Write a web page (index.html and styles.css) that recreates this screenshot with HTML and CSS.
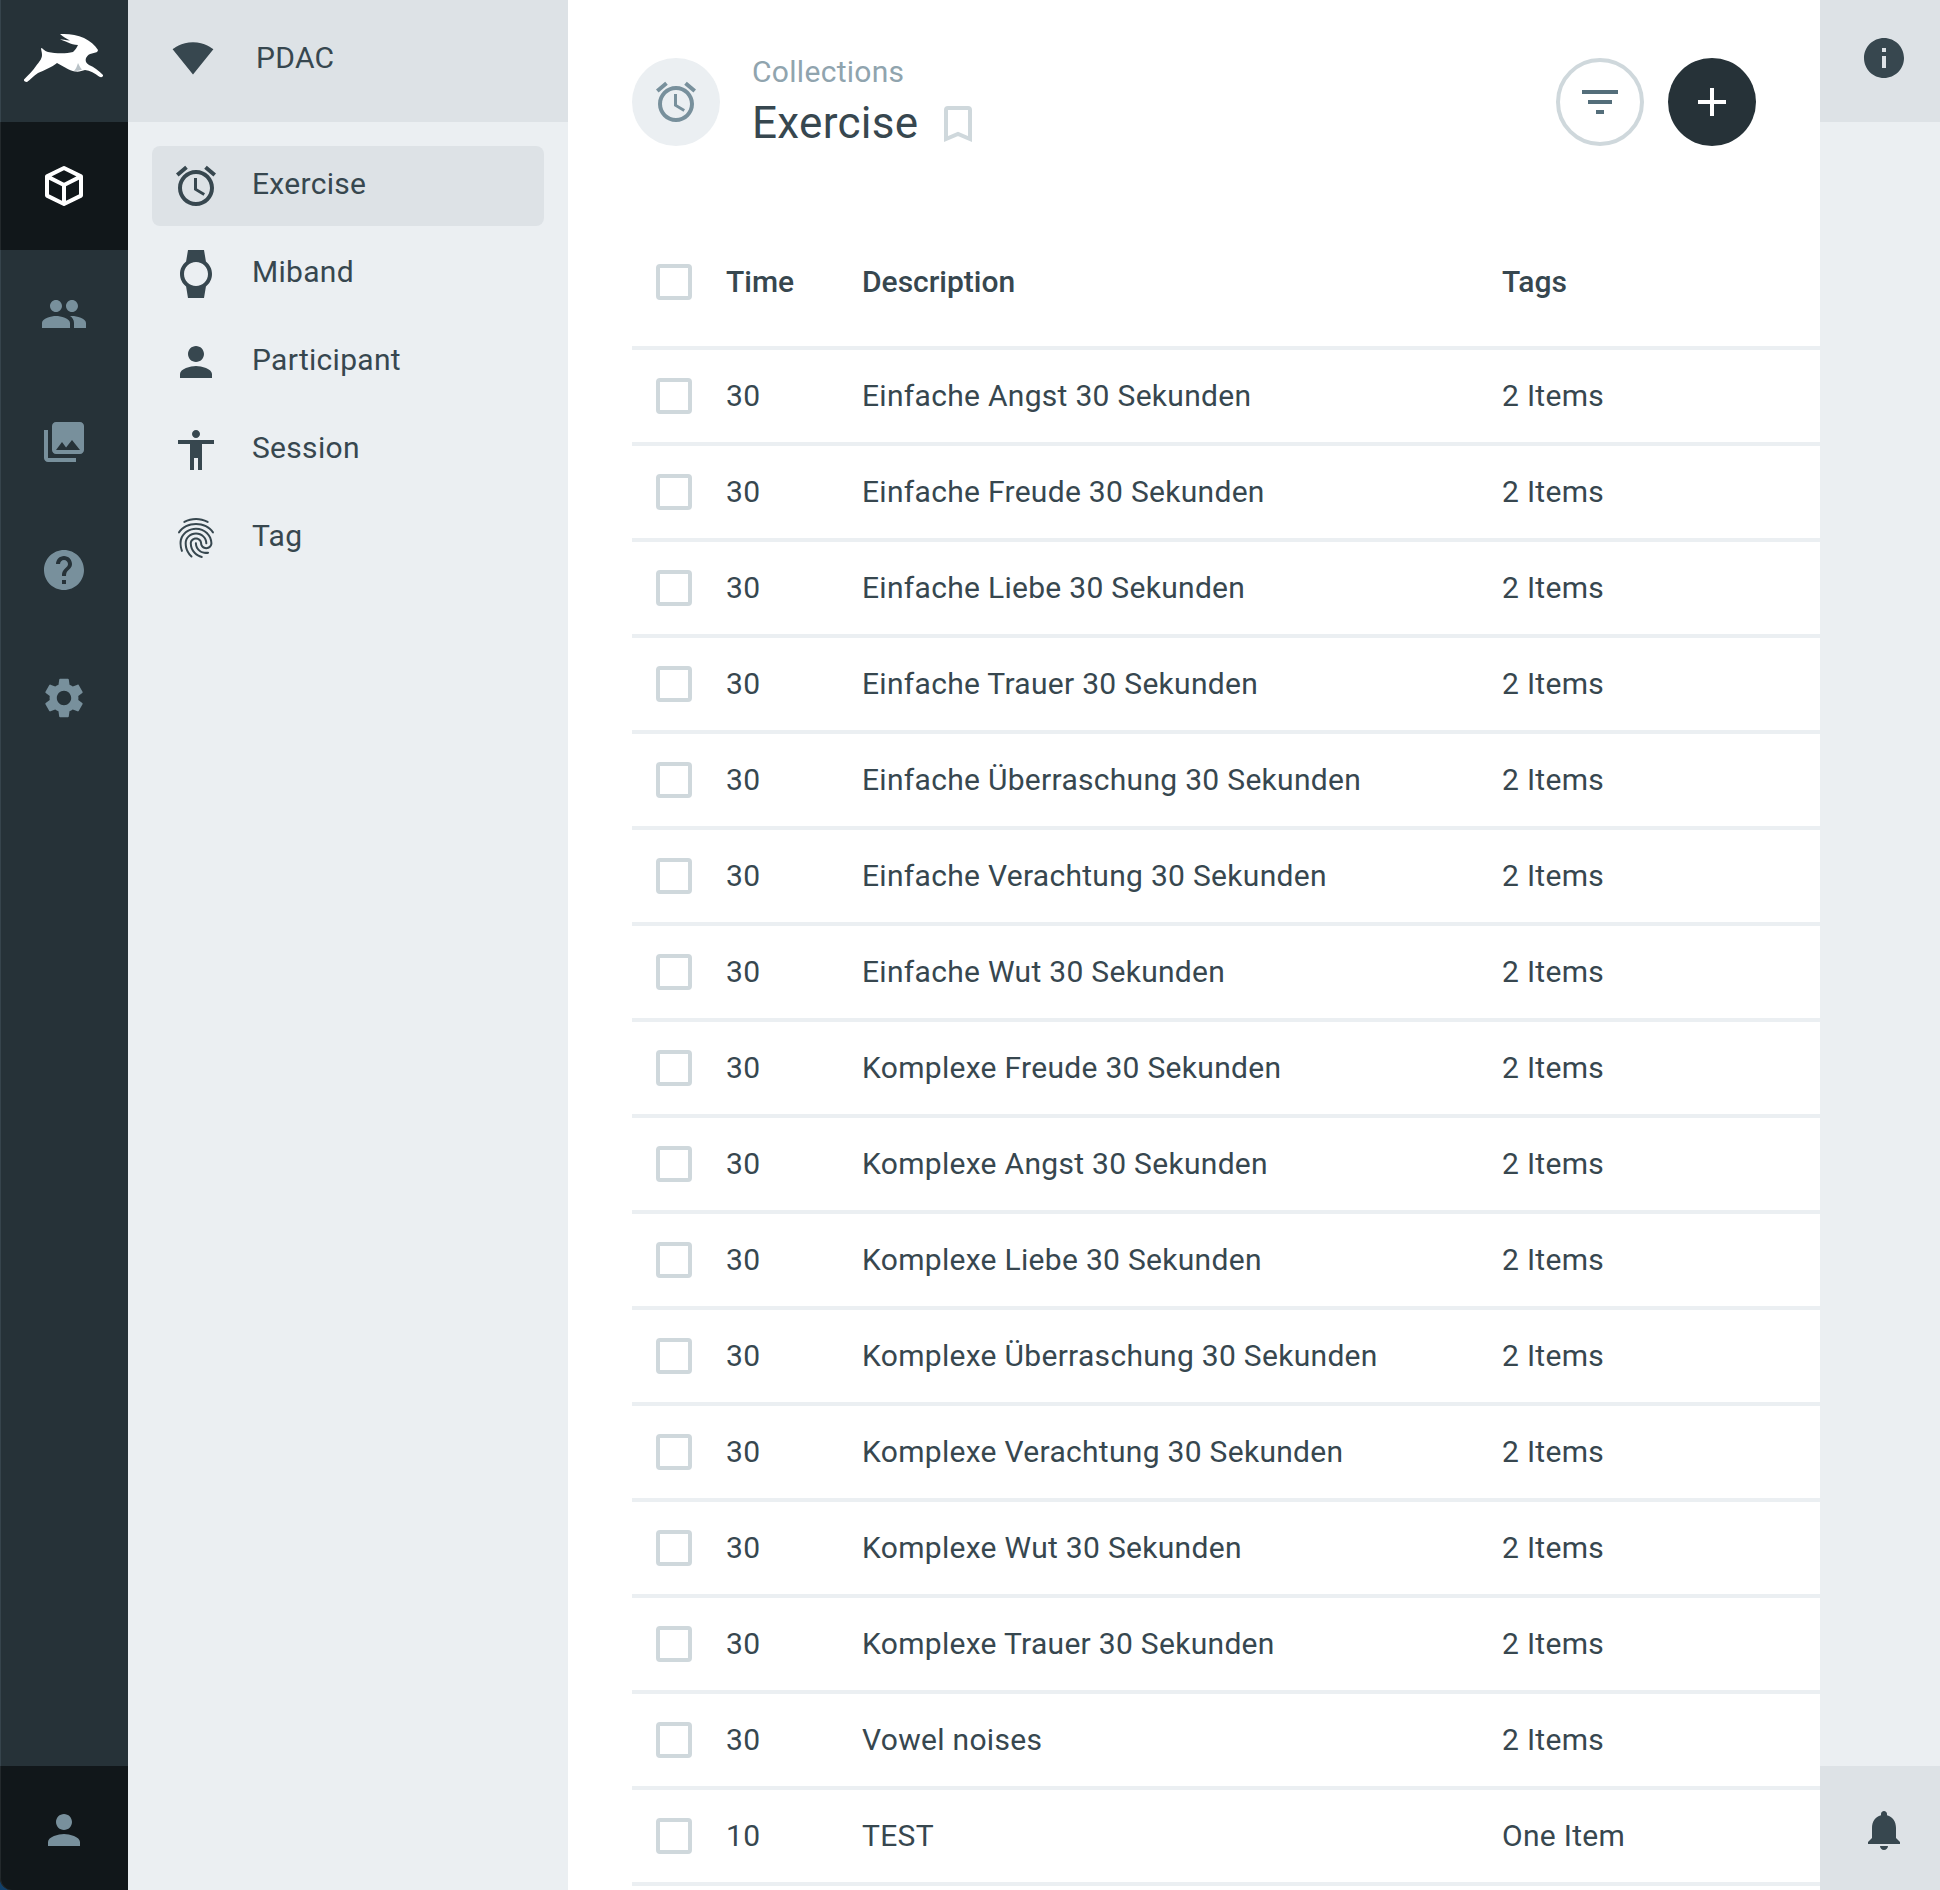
FILE: index.html
```html
<!DOCTYPE html>
<html lang="en">
<head>
    <meta charset="UTF-8">
    <title>Exercise - Collections</title>
    <link rel="stylesheet" href="styles.css">
</head>
<body>
    <div class="rail">
        <div class="rail-logo">
            <svg class="logo-hare" viewBox="0 0 80 48">
                <path fill="#fff" d="M36 0C44 -.5 53 .5 60 4C66 7 71 11 74 16C74 18 72 18.500 68 19.500C65 20 64 21 62 24C61 27 62 29 65 31C70 33 75 37 79 41C79.500 43 77 44 75 42.500C71 39.500 66 36.500 61 36C58 37 55 38 51 37.500C45 36.500 39 32 33 29C28 33 20 36.500 14 39C9 42 6 46 3 48C1 48 -.5 47 0 45.500C4 41 9 37 12 32C15 28 18 25 18 21C18 18 17 16 17 14C19 14 20 17 24 18C31 19.500 42 20 49 18C52 15 53 13 54 11C50 11 47 10 44 8.500C41 7 38 6 36 5.500C38 5.500 42 6 46 6.500C43 5 39 3 36 0Z"/>
                <path fill="#b9c2c7" d="M50 37C53 36.500 55 37 58 35.500C56 33.500 55 31 54 29C53 32 52 35 50 37Z"/>
            </svg>
        </div>
        <a class="rail-link rail-active" href="#">
            <svg class="rail-icon" viewBox="0 0 24 24" fill="none" stroke="#fff" stroke-width="2" stroke-linejoin="round"><path d="M12 3 20.500 7.200v9.600L12 21 3.500 16.800V7.200zM3.500 7.200 12 11.500l8.500-4.300M12 11.500V21"/></svg>
        </a>
        <a class="rail-link" href="#">
            <svg class="rail-icon" viewBox="0 0 24 24"><path d="M16 11c1.660 0 2.990-1.340 2.990-3S17.660 5 16 5c-1.660 0-3 1.340-3 3s1.340 3 3 3zm-8 0c1.660 0 2.990-1.340 2.990-3S9.660 5 8 5C6.340 5 5 6.340 5 8s1.340 3 3 3zm0 2c-2.330 0-7 1.170-7 3.500V19h14v-2.500c0-2.330-4.670-3.500-7-3.500zm8 0c-.29 0-.62.02-.97.05 1.160.84 1.970 1.970 1.970 3.450V19h6v-2.500c0-2.330-4.670-3.500-7-3.500z"/></svg>
        </a>
        <a class="rail-link" href="#">
            <svg class="rail-icon" viewBox="0 0 24 24"><path d="M22 16V4c0-1.100-.9-2-2-2H8c-1.100 0-2 .9-2 2v12c0 1.100.9 2 2 2h12c1.100 0 2-.9 2-2zm-11-4l2.030 2.710L16 11l4 5H8l3-4zM2 6v14c0 1.100.9 2 2 2h14v-2H4V6H2z"/></svg>
        </a>
        <a class="rail-link" href="#">
            <svg class="rail-icon" viewBox="0 0 24 24"><path d="M12 2C6.480 2 2 6.480 2 12s4.480 10 10 10 10-4.480 10-10S17.520 2 12 2zm1 17h-2v-2h2v2zm2.070-7.750l-.9.92C13.450 12.900 13 13.500 13 15h-2v-.5c0-1.100.45-2.100 1.170-2.830l1.240-1.260c.37-.36.59-.86.59-1.410 0-1.100-.9-2-2-2s-2 .9-2 2H8c0-2.210 1.790-4 4-4s4 1.790 4 4c0 .88-.36 1.680-.93 2.250z"/></svg>
        </a>
        <a class="rail-link" href="#">
            <svg class="rail-icon" viewBox="0 0 24 24"><path d="M19.140 12.940c.04-.3.06-.61.06-.94 0-.32-.02-.64-.07-.94l2.030-1.580c.18-.14.23-.41.12-.61l-1.920-3.320c-.12-.22-.37-.29-.59-.22l-2.390.96c-.5-.38-1.030-.7-1.620-.94l-.36-2.540c-.04-.24-.24-.41-.48-.41h-3.840c-.24 0-.43.17-.47.41l-.36 2.540c-.59.24-1.130.57-1.620.94l-2.390-.96c-.22-.08-.47 0-.59.22L2.740 8.870c-.12.21-.08.47.12.61l2.030 1.580c-.05.3-.09.63-.09.94s.02.64.07.94l-2.030 1.580c-.18.14-.23.41-.12.61l1.920 3.320c.12.22.37.29.59.22l2.390-.96c.5.38 1.030.7 1.620.94l.36 2.540c.05.24.24.41.48.41h3.840c.24 0 .44-.17.47-.41l.36-2.540c.59-.24 1.130-.56 1.620-.94l2.390.96c.22.08.47 0 .59-.22l1.920-3.320c.12-.22.07-.47-.12-.61l-2.010-1.580zM12 15.600c-1.980 0-3.600-1.620-3.600-3.600s1.620-3.600 3.600-3.600 3.600 1.620 3.600 3.600-1.620 3.600-3.600 3.600z"/></svg>
        </a>
        <a class="rail-link rail-user" href="#">
            <svg class="rail-icon" viewBox="0 0 24 24"><path d="M12 12c2.210 0 4-1.790 4-4s-1.790-4-4-4-4 1.790-4 4 1.790 4 4 4zm0 2c-2.670 0-8 1.340-8 4v2h16v-2c0-2.660-5.330-4-8-4z"/></svg>
        </a>
    </div>

    <div class="panel">
        <div class="panel-head">
            <svg class="wifi-icon" viewBox="0 0 24 24"><path d="M12.010 21.490L23.640 7c-.45-.34-4.930-4-11.640-4C5.280 3 .81 6.660.36 7l11.630 14.490.01.01.01-.01z"/></svg>
            <span class="panel-name">PDAC</span>
        </div>
        <div class="panel-list">
            <a class="panel-item panel-active" href="#">
                <svg class="panel-icon" viewBox="0 0 24 24"><path d="M22 5.720l-4.600-3.860-1.290 1.530 4.600 3.860L22 5.720zM7.880 3.390L6.600 1.860 2 5.710l1.290 1.530 4.590-3.850zM12.500 8H11v6l4.750 2.850.75-1.230-4-2.370V8zM12 4c-4.970 0-9 4.030-9 9s4.020 9 9 9c4.970 0 9-4.030 9-9s-4.030-9-9-9zm0 16c-3.870 0-7-3.130-7-7s3.130-7 7-7 7 3.130 7 7-3.130 7-7 7z"/></svg>
                <span class="panel-label">Exercise</span>
            </a>
            <a class="panel-item" href="#">
                <svg class="panel-icon" viewBox="0 0 24 24"><path d="M20 12c0-2.540-1.190-4.810-3.040-6.270L16 0H8l-.95 5.730C5.190 7.190 4 9.450 4 12s1.190 4.810 3.050 6.270L8 24h8l.96-5.730C18.810 16.810 20 14.540 20 12zM6 12c0-3.310 2.690-6 6-6s6 2.690 6 6-2.690 6-6 6-6-2.690-6-6z"/></svg>
                <span class="panel-label">Miband</span>
            </a>
            <a class="panel-item" href="#">
                <svg class="panel-icon" viewBox="0 0 24 24"><path d="M12 12c2.210 0 4-1.790 4-4s-1.790-4-4-4-4 1.790-4 4 1.790 4 4 4zm0 2c-2.670 0-8 1.340-8 4v2h16v-2c0-2.660-5.330-4-8-4z"/></svg>
                <span class="panel-label">Participant</span>
            </a>
            <a class="panel-item" href="#">
                <svg class="panel-icon" viewBox="0 0 24 24"><path d="M12 2c1.100 0 2 .9 2 2s-.9 2-2 2-2-.9-2-2 .9-2 2-2zm9 7h-6v13h-2v-6h-2v6H9V9H3V7h18v2z"/></svg>
                <span class="panel-label">Session</span>
            </a>
            <a class="panel-item" href="#">
                <svg class="panel-icon" viewBox="0 0 24 24"><path d="M17.810 4.470c-.08 0-.16-.02-.23-.06C15.660 3.420 14 3 12.010 3c-1.980 0-3.860.47-5.570 1.410-.24.13-.54.04-.68-.2-.13-.24-.04-.55.2-.68C7.820 2.520 9.860 2 12.010 2c2.130 0 3.990.47 6.030 1.520.25.13.34.43.21.67-.09.18-.26.28-.44.28zM3.500 9.720c-.1 0-.2-.03-.29-.09-.23-.16-.28-.47-.12-.7.99-1.400 2.250-2.500 3.750-3.270C9.980 4.040 14 4.030 17.150 5.650c1.500.77 2.760 1.860 3.750 3.250.16.22.11.54-.12.7-.23.16-.54.11-.7-.12-.9-1.260-2.040-2.250-3.390-2.940-2.870-1.470-6.540-1.470-9.400.01-1.360.7-2.500 1.700-3.400 2.960-.08.14-.23.21-.39.21zm6.250 12.070c-.13 0-.26-.05-.35-.15-.87-.87-1.340-1.430-2.010-2.640-.69-1.230-1.050-2.730-1.050-4.340 0-2.970 2.540-5.390 5.660-5.390s5.660 2.420 5.660 5.390c0 .28-.22.5-.5.5s-.5-.22-.5-.5c0-2.420-2.090-4.390-4.660-4.390-2.570 0-4.660 1.970-4.660 4.390 0 1.440.32 2.770.93 3.850.64 1.150 1.080 1.640 1.850 2.420.19.2.19.51 0 .71-.11.1-.24.15-.37.15zm7.170-1.850c-1.190 0-2.240-.3-3.100-.89-1.490-1.010-2.380-2.650-2.380-4.390 0-.28.22-.5.5-.5s.5.22.5.5c0 1.410.72 2.740 1.940 3.560.71.48 1.540.71 2.540.71.24 0 .64-.03 1.040-.1.27-.05.53.13.58.41.05.27-.13.53-.41.58-.57.11-1.070.12-1.210.12zM14.910 22c-.04 0-.09-.01-.13-.02-1.590-.44-2.630-1.030-3.720-2.100-1.400-1.390-2.170-3.240-2.170-5.220 0-1.620 1.380-2.940 3.080-2.940 1.700 0 3.080 1.320 3.080 2.940 0 1.070.93 1.940 2.080 1.940s2.080-.87 2.080-1.940c0-3.770-3.250-6.830-7.250-6.830-2.840 0-5.440 1.580-6.610 4.030-.39.81-.59 1.760-.59 2.800 0 .78.07 2.010.67 3.610.1.26-.03.55-.29.64-.26.1-.55-.04-.64-.29-.49-1.310-.73-2.610-.73-3.960 0-1.200.23-2.290.68-3.240 1.330-2.790 4.280-4.600 7.510-4.600 4.550 0 8.250 3.510 8.250 7.830 0 1.620-1.380 2.940-3.080 2.940s-3.080-1.320-3.080-2.940c0-1.070-.93-1.940-2.080-1.940s-2.080.87-2.080 1.940c0 1.710.66 3.310 1.870 4.510.95.94 1.860 1.460 3.270 1.850.27.07.42.35.35.61-.05.23-.26.38-.47.38z"/></svg>
                <span class="panel-label">Tag</span>
            </a>
        </div>
    </div>

    <div class="main">
        <div class="page-head">
            <div class="head-avatar">
                <svg class="avatar-icon" viewBox="0 0 24 24"><path d="M22 5.720l-4.600-3.860-1.290 1.530 4.600 3.860L22 5.720zM7.880 3.390L6.600 1.860 2 5.710l1.290 1.530 4.590-3.850zM12.500 8H11v6l4.750 2.850.75-1.230-4-2.370V8zM12 4c-4.970 0-9 4.030-9 9s4.020 9 9 9c4.970 0 9-4.030 9-9s-4.030-9-9-9zm0 16c-3.870 0-7-3.130-7-7s3.130-7 7-7 7 3.130 7 7-3.130 7-7 7z"/></svg>
            </div>
            <div class="head-text">
                <div class="head-crumb">Collections</div>
                <div class="head-title">
                    Exercise
                    <svg class="bookmark-icon" viewBox="0 0 28 36"><path d="M2 4a2 2 0 0 1 2-2h20a2 2 0 0 1 2 2v29l-12-5-12 5z"/></svg>
                </div>
            </div>
            <div class="head-actions">
                <button class="round-btn filter-btn">
                    <svg viewBox="0 0 24 24"><path d="M10 18h4v-2h-4v2zM3 6v2h18V6H3zm3 7h12v-2H6v2z"/></svg>
                </button>
                <button class="round-btn add-btn">
                    <svg viewBox="0 0 24 24"><path d="M19 13h-6v6h-2v-6H5v-2h6V5h2v6h6v2z"/></svg>
                </button>
            </div>
        </div>

        <div class="table">
            <div class="row table-head">
                <span class="check"></span><span>Time</span><span>Description</span><span>Tags</span>
            </div>
            <div class="row"><span class="check"></span><span>30</span><span>Einfache Angst 30 Sekunden</span><span>2 Items</span></div>
            <div class="row"><span class="check"></span><span>30</span><span>Einfache Freude 30 Sekunden</span><span>2 Items</span></div>
            <div class="row"><span class="check"></span><span>30</span><span>Einfache Liebe 30 Sekunden</span><span>2 Items</span></div>
            <div class="row"><span class="check"></span><span>30</span><span>Einfache Trauer 30 Sekunden</span><span>2 Items</span></div>
            <div class="row"><span class="check"></span><span>30</span><span>Einfache Überraschung 30 Sekunden</span><span>2 Items</span></div>
            <div class="row"><span class="check"></span><span>30</span><span>Einfache Verachtung 30 Sekunden</span><span>2 Items</span></div>
            <div class="row"><span class="check"></span><span>30</span><span>Einfache Wut 30 Sekunden</span><span>2 Items</span></div>
            <div class="row"><span class="check"></span><span>30</span><span>Komplexe Freude 30 Sekunden</span><span>2 Items</span></div>
            <div class="row"><span class="check"></span><span>30</span><span>Komplexe Angst 30 Sekunden</span><span>2 Items</span></div>
            <div class="row"><span class="check"></span><span>30</span><span>Komplexe Liebe 30 Sekunden</span><span>2 Items</span></div>
            <div class="row"><span class="check"></span><span>30</span><span>Komplexe Überraschung 30 Sekunden</span><span>2 Items</span></div>
            <div class="row"><span class="check"></span><span>30</span><span>Komplexe Verachtung 30 Sekunden</span><span>2 Items</span></div>
            <div class="row"><span class="check"></span><span>30</span><span>Komplexe Wut 30 Sekunden</span><span>2 Items</span></div>
            <div class="row"><span class="check"></span><span>30</span><span>Komplexe Trauer 30 Sekunden</span><span>2 Items</span></div>
            <div class="row"><span class="check"></span><span>30</span><span>Vowel noises</span><span>2 Items</span></div>
            <div class="row"><span class="check"></span><span>10</span><span>TEST</span><span>One Item</span></div>
        </div>
    </div>

    <div class="side">
        <div class="side-top">
            <svg class="side-icon" viewBox="0 0 24 24"><path d="M12 2C6.480 2 2 6.480 2 12s4.480 10 10 10 10-4.480 10-10S17.520 2 12 2zm1 15h-2v-6h2v6zm0-8h-2V7h2v2z"/></svg>
        </div>
        <div class="side-bottom">
            <svg class="side-icon" viewBox="0 0 24 24"><path d="M12 22c1.100 0 2-.9 2-2h-4c0 1.100.89 2 2 2zm6-6v-5c0-3.070-1.640-5.640-4.500-6.320V4c0-.83-.67-1.500-1.500-1.500s-1.500.67-1.500 1.500v.68C7.630 5.360 6 7.920 6 11v5l-2 2v1h16v-1l-2-2z"/></svg>
        </div>
    </div>
</body>
</html>
```

FILE: styles.css
```css
html, body {
    height: 1890px;
    overflow: hidden;
}
body {
    display: flex;
    margin: 0;
    font-family: Roboto, "Liberation Sans", sans-serif;
    font-size: 30px;
    letter-spacing: 0.01em;
    color: #37474f;
    background: #12406a; /* shows in the window corner */
}
a {
    color: inherit;
    text-decoration: none;
}

/* left rail */
.rail {
    display: flex;
    flex-direction: column;
    flex: none;
    width: 128px;
    background: #263238;
    border-bottom-left-radius: 12px;
    box-shadow: inset 1px 0 #36444c;
}
.rail-logo {
    display: flex;
    align-items: center;
    justify-content: center;
    box-sizing: border-box;
    height: 122px;
    padding-bottom: 6px;
}
.logo-hare {
    width: 80px;
    height: 48px;
    overflow: visible;
}
.rail-link {
    display: flex;
    align-items: center;
    justify-content: center;
    height: 128px;
}
.rail-icon {
    width: 48px;
    height: 48px;
    fill: #78909c;
}
.rail-active {
    background: #11171a;
    box-shadow: inset 1px 0 #23292c;
}
.rail-active .rail-icon {
    fill: none;
}
.rail-user {
    box-sizing: border-box;
    margin-top: auto;
    height: 124px;
    padding-top: 4px;
    background: #11171a;
    border-bottom-left-radius: 12px;
    box-shadow: inset 1px 0 #23292c;
}

/* collections panel */
.panel {
    flex: none;
    width: 440px;
    background: #ebeff2;
}
.panel-head {
    display: flex;
    align-items: center;
    box-sizing: border-box;
    height: 122px;
    padding: 0 0 6px 44px;
    gap: 42px;
    background: #dde2e6;
}
.panel-name {
    padding-bottom: 2px;
}
.wifi-icon {
    width: 42px;
    height: 42px;
    fill: #37474f;
}
.panel-list {
    display: flex;
    flex-direction: column;
    gap: 8px;
    padding: 24px 24px 0;
}
.panel-item {
    display: flex;
    align-items: center;
    gap: 32px;
    height: 80px;
    padding-left: 20px;
    border-radius: 8px;
}
.panel-label {
    padding-bottom: 5px;
}
.panel-active {
    background: #dde2e6;
}
.panel-icon {
    flex: none;
    width: 48px;
    height: 48px;
    fill: #37474f;
}

/* main column */
.main {
    flex: none;
    width: 1252px;
    padding-left: 64px;
    box-sizing: border-box;
    background: #fff;
}
.page-head {
    display: flex;
    align-items: center;
    height: 88px;
    padding-top: 58px;
    padding-right: 64px;
}
.head-avatar {
    display: flex;
    align-items: center;
    justify-content: center;
    width: 88px;
    height: 88px;
    border-radius: 50%;
    background: #ebeff2;
}
.avatar-icon {
    width: 48px;
    height: 48px;
    fill: #78909c;
}
.head-text {
    margin-left: 32px;
}
.head-crumb {
    font-size: 30px;
    line-height: 36px;
    color: #90a4ae;
}
.head-title {
    display: flex;
    align-items: center;
    gap: 26px;
    margin-top: 6px;
    font-size: 44px;
    line-height: 54px;
}
.bookmark-icon {
    width: 28px;
    height: 36px;
    margin-top: 2px;
    fill: none;
    stroke: #cfd8dc;
    stroke-width: 4;
}
.head-actions {
    display: flex;
    gap: 24px;
    margin-left: auto;
}
.round-btn {
    display: flex;
    align-items: center;
    justify-content: center;
    width: 88px;
    height: 88px;
    padding: 0;
    border-radius: 50%;
    border: 0;
}
.round-btn svg {
    width: 48px;
    height: 48px;
}
.filter-btn {
    background: #fff;
    border: 4px solid #cfd8dc;
}
.filter-btn svg {
    fill: #546e7a;
}
.add-btn {
    background: #263238;
}
.add-btn svg {
    fill: #fff;
}

/* table */
.table {
    margin-top: 72px;
}
.row {
    display: grid;
    grid-template-columns: 70px 136px 640px 1fr;
    align-items: center;
    height: 92px;
    padding-left: 24px;
    border-bottom: 4px solid #ebeff2;
}
.row span {
    padding-bottom: 2px;
}
.table-head {
    height: 128px;
    font-weight: 500;
    letter-spacing: 0;
}
.check {
    width: 36px;
    height: 36px;
    box-sizing: border-box;
    border: 4px solid #cfd8dc;
    border-radius: 4px;
}

/* right side */
.side {
    display: flex;
    flex: none;
    flex-direction: column;
    justify-content: space-between;
    width: 120px;
    background: #ebeff2;
}
.side-top, .side-bottom {
    display: flex;
    align-items: center;
    justify-content: center;
    box-sizing: border-box;
    padding-left: 8px;
    background: #dde2e6;
}
.side-top {
    height: 122px;
    padding-bottom: 6px;
}
.side-bottom {
    height: 124px;
    padding-top: 4px;
}
.side-icon {
    width: 48px;
    height: 48px;
    fill: #37474f;
}
```
